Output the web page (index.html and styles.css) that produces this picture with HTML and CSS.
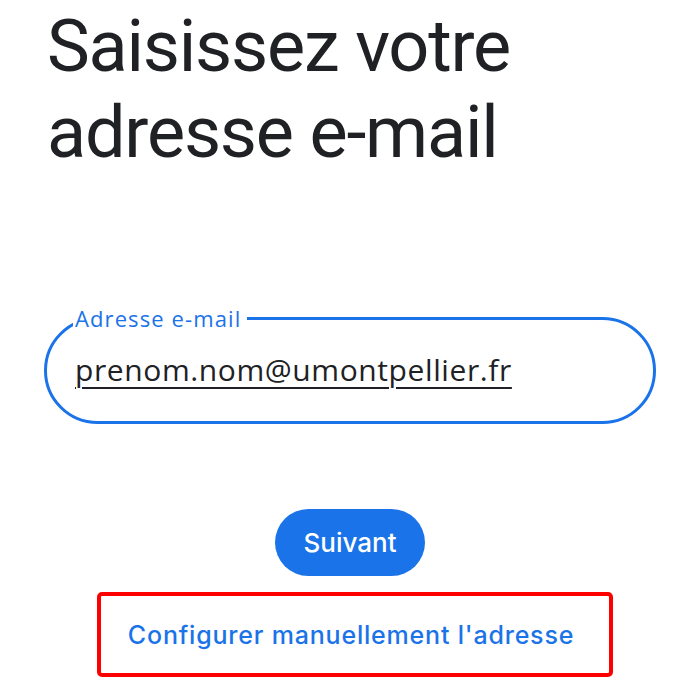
FILE: index.html
```html
<!DOCTYPE html>
<html lang="fr">
<head>
<meta charset="utf-8">
<link rel="stylesheet" href="styles.css">
</head>
<body>
<main class="page">
  <h1 class="title">Saisissez votre adresse e-mail</h1>
  <fieldset class="field">
    <legend class="field-label">Adresse e-mail</legend>
    <span class="field-value">prenom.nom@umontpellier.fr</span>
  </fieldset>
  <div class="actions">
    <button class="btn-next">Suivant</button>
    <div class="manual-box">
      <a class="manual-link">Configurer manuellement l'adresse</a>
    </div>
  </div>
</main>
</body>
</html>
```
FILE: styles.css
```css
html, body {
  margin: 0;
  background: #ffffff;
}
.page {
  width: 700px;
  height: 700px;
  box-sizing: border-box;
  padding: 4px 44px 0 44px;
  font-family: "Open Sans", Roboto, sans-serif;
  color: #202124;
  overflow: hidden;
}
.title {
  margin: 0 0 0 3px;
  font-family: Roboto, sans-serif;
  font-size: 72px;
  line-height: 86px;
  font-weight: 400;
  width: 480px;
  letter-spacing: -1.2px;
}
.field {
  margin: 130px 0 0 0;
  border: 3px solid #1a73e8;
  border-radius: 56px;
  height: 118px;
  box-sizing: border-box;
  padding: 0 0 0 26px;
  width: 612px;
}
.field-label {
  padding: 0 6px 0 2px;
  margin-left: 0;
  font-size: 22px;
  letter-spacing: 1.1px;
  color: #1a73e8;
  line-height: 24px;
}
.field-value {
  display: block;
  margin: 20px 0 0 2px;
  font-size: 30px;
  letter-spacing: 0.6px;
  line-height: 40px;
  color: #202124;
  text-decoration: underline;
  text-decoration-thickness: 2px;
  text-underline-offset: 6px;
}
.actions {
  display: flex;
  flex-direction: column;
  align-items: center;
  margin-top: 85px;
}
.btn-next {
  border: none;
  background: #1a73e8;
  color: #ffffff;
  font-family: Inter, sans-serif;
  font-weight: 500;
  font-size: 26px;
  height: 67px;
  padding: 0 28px;
  border-radius: 34px;
}
.manual-box {
  margin-top: 16px;
  margin-left: 10px;
  width: 516px;
  height: 85px;
  box-sizing: border-box;
  border: 4px solid #ff0000;
  border-radius: 5px;
  display: flex;
  align-items: center;
  justify-content: center;
  padding-right: 8px;
}
.manual-link {
  color: #1a73e8;
  font-family: Inter, sans-serif;
  font-size: 25px;
  font-weight: 500;
  letter-spacing: 0.8px;
}
```
